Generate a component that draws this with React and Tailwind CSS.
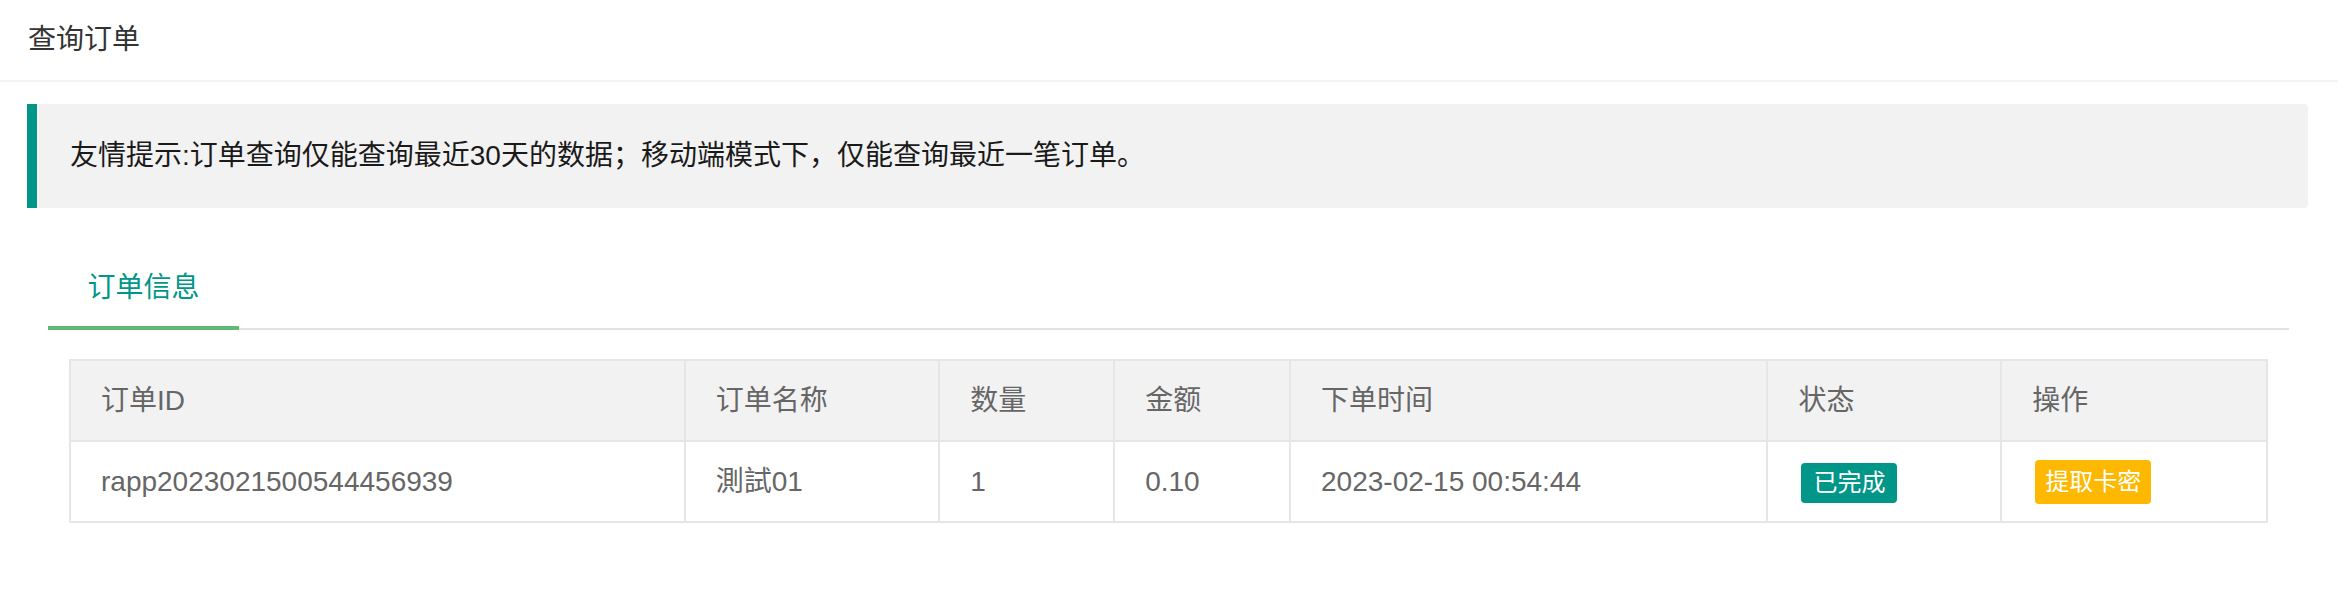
const font = "font-['Liberation_Sans','Noto_Sans_CJK_SC',sans-serif]"

const columns = [
  { title: '订单ID', width: 'w-[615px]' },
  { title: '订单名称', width: 'w-[255px]' },
  { title: '数量', width: 'w-[175px]' },
  { title: '金额', width: 'w-[176px]' },
  { title: '下单时间', width: 'w-[478px]' },
  { title: '状态', width: 'w-[234px]' },
  { title: '操作', width: 'w-[266px]' },
]

const order = {
  id: 'rapp2023021500544456939',
  name: '測試01',
  qty: 1,
  amount: '0.10',
  time: '2023-02-15 00:54:44',
}

export default function App() {
  return (
    <div className={`w-[2338px] h-[592px] bg-white ${font} text-[#333]`}>
      {/* Card header */}
      <div className="h-[82px] flex items-center pl-[28px] border-b-2 border-[#f3f3f3] text-[28px]">
        查询订单
      </div>

      <div className="pt-[22px] pl-[27px] pr-[30px]">
        {/* Tip */}
        <div className="h-[104px] flex items-center bg-[#f2f2f2] border-l-[10px] border-[#009688] rounded-r-[4px] pl-[33px] text-[28px] text-[#1a1a1a]">
          友情提示:订单查询仅能查询最近30天的数据；移动端模式下，仅能查询最近一笔订单。
        </div>

        {/* Tabs */}
        <div className="mt-[40px] ml-[21px] mr-[19px]">
          <div className="flex h-[82px] border-b-2 border-[#e2e2e2]">
            <div className="relative w-[191px] flex items-center justify-center text-[28px] text-[#009688]">
              订单信息
              <div className="absolute left-0 right-0 bottom-[-2px] h-[4px] bg-[#5FB878]" />
            </div>
          </div>

          <div className="px-[21px] pt-[29px]">
            <table className="table-fixed border-collapse text-[28px] text-[#666]">
              <thead>
                <tr className="bg-[#f2f2f2]">
                  {columns.map((c) => (
                    <th key={c.title} className={`${c.width} h-[81px] border-2 border-[#e6e6e6] pl-[30px] text-left font-normal leading-[40px]`}>
                      {c.title}
                    </th>
                  ))}
                </tr>
              </thead>
              <tbody>
                <tr>
                  <td className="h-[81px] border-2 border-[#e6e6e6] pl-[30px] leading-[40px]">{order.id}</td>
                  <td className="border-2 border-[#e6e6e6] pl-[30px] leading-[40px]">{order.name}</td>
                  <td className="border-2 border-[#e6e6e6] pl-[30px] leading-[40px]">{order.qty}</td>
                  <td className="border-2 border-[#e6e6e6] pl-[30px] leading-[40px]">{order.amount}</td>
                  <td className="border-2 border-[#e6e6e6] pl-[30px] leading-[40px]">{order.time}</td>
                  <td className="border-2 border-[#e6e6e6] pl-[30px]">
                    <span className="ml-[3px] inline-flex items-center h-[40px] px-[12px] rounded-[4px] bg-[#009688] text-white text-[24px] align-middle">
                      已完成
                    </span>
                  </td>
                  <td className="border-2 border-[#e6e6e6] pl-[30px]">
                    <button className="ml-[3px] inline-flex items-center h-[44px] px-[10px] rounded-[4px] bg-[#FFB800] text-white text-[24px] align-middle">
                      提取卡密
                    </button>
                  </td>
                </tr>
              </tbody>
            </table>
          </div>
        </div>
      </div>
    </div>
  )
}
